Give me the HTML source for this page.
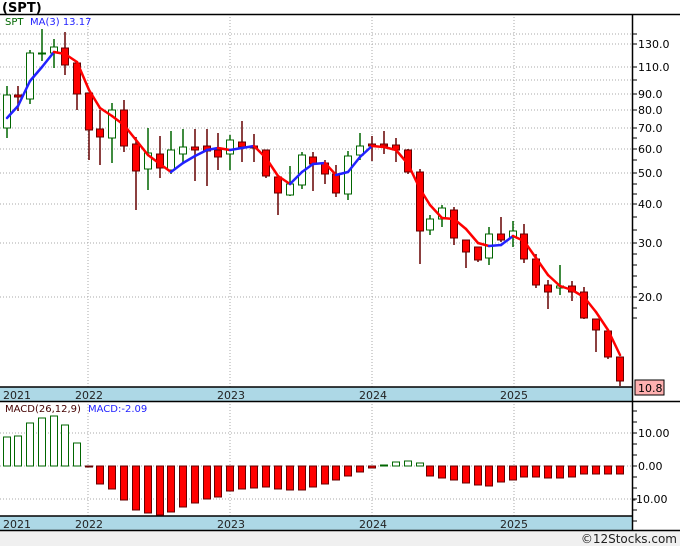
<!DOCTYPE html><html><head><style>body{margin:0;background:#fff}svg{display:block;font-family:"DejaVu Sans","Liberation Sans",sans-serif}</style></head><body>
<svg width="680" height="546" xmlns="http://www.w3.org/2000/svg">
<rect width="680" height="546" fill="#fff"/>
<rect y="531" width="680" height="15" fill="#f0f0f0"/>
<text x="2" y="12" font-size="13" font-weight="bold" fill="#000">(SPT)</text>
<g stroke="#aaa" stroke-dasharray="1,2" stroke-width="1">
<path d="M0 34H632M0 44H632M0 67H632M0 80H632M0 94H632M0 110H632M0 128H632M0 149H632M0 173H632M0 204H632M0 243H632M0 297H632M0 433H632M0 466H632M0 499H632"/>
<path d="M88 14V530M230 14V530M372 14V530M514 14V530"/>
</g>
<rect x="0" y="387" width="632" height="14" fill="#add8e6"/>
<rect x="0" y="516" width="632" height="14" fill="#add8e6"/>
<g stroke="#000" stroke-width="1.5" fill="none">
<path d="M0 14.5H680M0 387H632M0 401.5H680M0 516H632M0 530.5H680M632.5 14V530"/>
</g>
<g font-size="11" fill="#222">
<text x="3" y="399">2021</text><text x="75" y="399">2022</text><text x="217" y="399">2023</text><text x="359" y="399">2024</text><text x="500" y="399">2025</text>
<text x="3" y="528">2021</text><text x="75" y="528">2022</text><text x="217" y="528">2023</text><text x="359" y="528">2024</text><text x="500" y="528">2025</text>
</g>
<g font-size="11" fill="#000">
<text x="638" y="48">130.0</text><text x="638" y="71">110.0</text><text x="638" y="98">90.0</text><text x="638" y="114">80.0</text><text x="638" y="132">70.0</text><text x="638" y="153">60.0</text><text x="638" y="177">50.0</text><text x="638" y="208">40.0</text><text x="638" y="247">30.0</text><text x="638" y="301">20.0</text>
<text x="638" y="437">10.00</text><text x="638" y="470">0.00</text><text x="632" y="503">-10.00</text>
</g>
<g stroke="#000"><path d="M632 34h5M632 44h5M632 67h5M632 80h5M632 94h5M632 110h5M632 128h5M632 138h5M632 149h5M632 160h5M632 173h5M632 184h5M632 194h5M632 204h5M632 217h5M632 230h5M632 243h5M632 254h5M632 265h5M632 276h5M632 287h5M632 297h5M632 308h5M632 318h5M632 411h5M632 422h5M632 433h5M632 444h5M632 455h5M632 466h5M632 477h5M632 488h5M632 499h5M632 510h5M632 521h5"/></g>
<rect x="635" y="380" width="29" height="15" fill="#ffb0b0" stroke="#000"/>
<text x="638" y="392" font-size="11" fill="#000">10.8</text>
<text x="5" y="25" font-size="10" fill="#060">SPT</text><text x="30" y="25" font-size="10" fill="#22f">MA(3)   13.17</text>
<text x="5" y="412" font-size="10" fill="#400">MACD(26,12,9)</text><text x="88" y="412" font-size="10" fill="#22f">MACD:-2.09</text>
<text x="677" y="543" font-size="12" fill="#222" text-anchor="end">©12Stocks.com</text>
<g id="c"></g>
<polyline id="ma" fill="none" stroke-width="2.5"/>
</svg>
<script>
var C=[[7,'g',95,128,86,138],[18,'r',95,97,86,111],[30,'g',53,99,50,104],[42,'g',53,54,29,61],[54,'g',47,53,39,68],[65,'r',48,65,32,75],[77,'r',63,94,62,110],[89,'r',93,130,93,160],[100,'r',129,137,110,165],[112,'g',110,138,103,163],[124,'r',110,146,100,152],[136,'r',144,171,137,210],[148,'g',153,169,128,190],[160,'r',154,168,136,178],[171,'g',150,170,131,174],[183,'g',147,154,129,163],[195,'r',147,150,129,181],[207,'r',146,151,129,186],[218,'r',150,157,133,170],[230,'g',140,154,135,170],[242,'r',142,147,121,162],[254,'r',146,148,134,162],[266,'r',150,176,150,178],[278,'r',177,193,177,215],[290,'g',184,195,166,196],[302,'g',155,185,152,189],[313,'r',157,164,152,191],[325,'r',163,174,160,184],[336,'r',174,193,165,197],[348,'g',156,194,151,200],[360,'g',146,155,133,160],[372,'r',144,146,136,161],[384,'r',144,146,131,154],[396,'r',145,150,138,162],[408,'r',150,172,149,174],[420,'r',172,231,169,264],[430,'g',219,230,215,235],[442,'g',208,219,205,227],[454,'r',210,238,207,245],[466,'r',240,252,240,268],[478,'r',247,260,247,262],[489,'g',234,258,227,265],[501,'r',234,240,217,242],[513,'g',231,237,221,247],[524,'r',234,259,224,263],[536,'r',259,285,254,288],[548,'r',285,292,280,309],[560,'g',286,288,265,295],[572,'r',286,292,281,301],[584,'r',292,318,287,319],[596,'r',319,330,319,352],[608,'r',331,357,331,359],[620,'r',357,381,357,386]];
var M=[437,436,423,418,416,425,443,466,484,489,500,510,513,515,512,507,503,499,497,491,489,488,487,489,490,490,487,484,480,476,472,468,465,462,461,463,476,478,480,483,485,486,482,480,477,477,478,478,477,474,474,474,474];
var MA=[118,106,81,67,52,54,62,90,108,116,125,140,155,164,172,163,156,150,148,150,148,146,158,176,184,172,164,163,175,172,157,146,147,150,164,189,205,218,219,229,243,246,245,236,241,258,275,286,290,297,312,330,355];
var s='';
C.forEach(function(c,i){var g=c[1]=='g',w=g?'#060':'#600',f=g?'#fff':'#f00',x=c[0];
s+='<line x1="'+x+'" x2="'+x+'" y1="'+c[4]+'" y2="'+c[5]+'" stroke="'+w+'" stroke-width="1.5"/>';
s+='<rect x="'+(x-3.5)+'" y="'+c[2]+'" width="7" height="'+Math.max(1,c[3]-c[2])+'" fill="'+f+'" stroke="'+w+'"/>';
var m=M[i],gm=m<466,y0=Math.min(m,466),h=Math.max(1,Math.abs(m-466));
s+='<rect x="'+(x-3.5)+'" y="'+y0+'" width="7" height="'+h+'" fill="'+(gm?'#fff':'#f00')+'" stroke="'+(gm?'#060':'#600')+'"/>';
if(i>0){var up=MA[i]<MA[i-1];s+='<line x1="'+C[i-1][0]+'" y1="'+MA[i-1]+'" x2="'+x+'" y2="'+MA[i]+'" stroke="'+(up?'#22f':'#f00')+'" stroke-width="2.5" stroke-linecap="round"/>';}
});
document.getElementById('c').innerHTML=s;
</script>
</body></html>
